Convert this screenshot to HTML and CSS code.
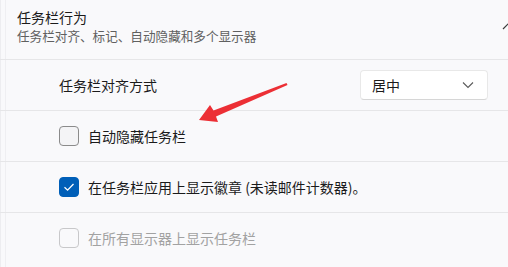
FILE: index.html
```html
<!DOCTYPE html>
<html lang="zh-CN">
<head>
<meta charset="utf-8">
<link rel="stylesheet" href="styles.css">
</head>
<body>
<div class="page">
  <div class="header">
    <div class="header-text">
      <div class="title">任务栏行为</div>
      <div class="subtitle">任务栏对齐、标记、自动隐藏和多个显示器</div>
    </div>
    <svg class="collapse" width="16" height="10" viewBox="0 0 16 10"><path d="M1 9 L8 2 L15 9" fill="none" stroke="#3a3a3a" stroke-width="1.2"/></svg>
  </div>
  <div class="row">
    <div class="label">任务栏对齐方式</div>
    <div class="select">
      <span>居中</span>
      <svg width="12" height="8" viewBox="0 0 12 8"><path d="M1 1.5 L6 6.5 L11 1.5" fill="none" stroke="#5a5a5a" stroke-width="1.1"/></svg>
    </div>
  </div>
  <div class="row">
    <span class="box"></span>
    <span class="label">自动隐藏任务栏</span>
  </div>
  <div class="row">
    <span class="box checked"><svg width="12" height="10" viewBox="0 0 12 10"><path d="M1.5 5.2 L4.6 8.2 L10.5 2" fill="none" stroke="#fff" stroke-width="1.3"/></svg></span>
    <span class="label">在任务栏应用上显示徽章 (未读邮件计数器)。</span>
  </div>
  <div class="row">
    <span class="box disabled"></span>
    <span class="label muted">在所有显示器上显示任务栏</span>
  </div>
  <svg class="annot" width="508" height="267" viewBox="0 0 508 267"><polygon points="199,120 210,105 213.5,110.5 286.5,83 287.5,85 216,116.5 218,122" fill="#ec2f35"/></svg>
</div>
</body>
</html>
```
FILE: styles.css
```css
html, body {
  margin: 0;
  padding: 0;
}
body {
  width: 508px;
  height: 267px;
  overflow: hidden;
  background: #f9f9fb;
  font-family: "Noto Sans CJK SC", "Noto Sans", sans-serif;
  color: #1b1b1b;
}
.page {
  position: relative;
  width: 508px;
  height: 267px;
  overflow: hidden;
  background:
    linear-gradient(to right, transparent 0, #ededf0 0, #ededf0 1px, transparent 1px, transparent 5px, #efeff2 5px, #efeff2 6px, transparent 6px);
}
.header {
  height: 59px;
  display: flex;
  align-items: flex-start;
  padding-left: 17px;
  box-sizing: border-box;
}
.header-text {
  display: flex;
  flex-direction: column;
  padding-top: 8px;
}
.title {
  font-size: 14px;
  line-height: 18px;
  color: #1b1b1b;
}
.subtitle {
  font-size: 12.6px;
  line-height: 16px;
  margin-top: 2px;
  color: #606060;
}
.collapse {
  margin-left: auto;
  margin-right: -10px;
  margin-top: 20px;
  flex: none;
}
.row {
  height: 51px;
  box-sizing: border-box;
  border-top: 1px solid #e6e6e8;
  display: flex;
  align-items: center;
  padding-left: 59px;
  padding-right: 20px;
}
.label {
  font-size: 14px;
  line-height: 20px;
  color: #1b1b1b;
}
.label.muted {
  color: #a2a2a2;
}
.select {
  margin-left: auto;
  width: 128px;
  height: 30px;
  box-sizing: border-box;
  background: #ffffff;
  border: 1px solid #e8e8e8;
  border-bottom-color: #d6d6d6;
  border-radius: 4px;
  display: flex;
  align-items: center;
  padding-left: 11px;
  padding-right: 13px;
  font-size: 14px;
}
.select span {
  line-height: 20px;
}
.select svg {
  margin-left: auto;
}
.box {
  width: 20px;
  height: 20px;
  box-sizing: border-box;
  border: 1px solid #8b8b8b;
  border-radius: 4px;
  background: #f4f4f6;
  margin-right: 9px;
  flex: none;
  display: flex;
  align-items: center;
  justify-content: center;
}
.box.checked {
  background: #005fb8;
  border-color: #005fb8;
}
.box.disabled {
  border-color: #c8c8ca;
  background: #f9f9fb;
}
.annot {
  position: absolute;
  left: 0;
  top: 0;
  pointer-events: none;
}
```
